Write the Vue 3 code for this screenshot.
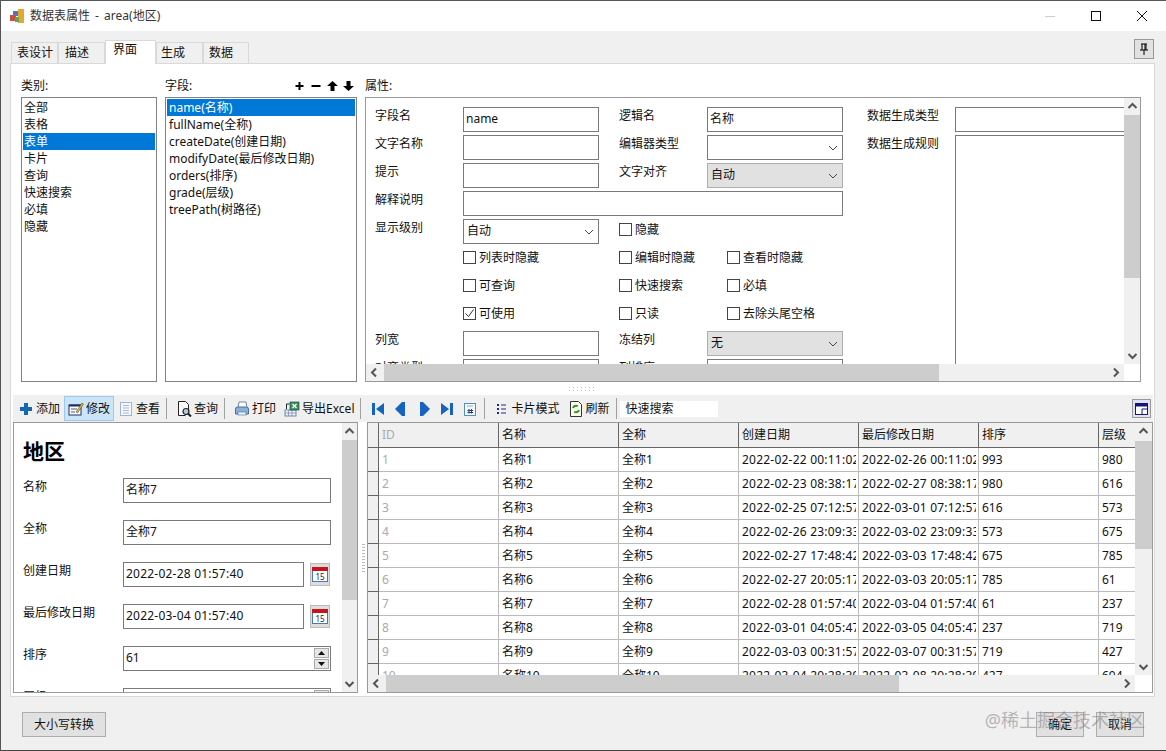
<script setup>
const categories = ['全部', '表格', '表单', '卡片', '查询', '快速搜索', '必填', '隐藏']
const fields = ['name(名称)', 'fullName(全称)', 'createDate(创建日期)', 'modifyDate(最后修改日期)', 'orders(排序)', 'grade(层级)', 'treePath(树路径)']
const columns = ['ID', '名称', '全称', '创建日期', '最后修改日期', '排序', '层级']
const rows = [
  ['1', '名称1', '全称1', '2022-02-22 00:11:02', '2022-02-26 00:11:02', '993', '980'],
  ['2', '名称2', '全称2', '2022-02-23 08:38:17', '2022-02-27 08:38:17', '980', '616'],
  ['3', '名称3', '全称3', '2022-02-25 07:12:57', '2022-03-01 07:12:57', '616', '573'],
  ['4', '名称4', '全称4', '2022-02-26 23:09:33', '2022-03-02 23:09:33', '573', '675'],
  ['5', '名称5', '全称5', '2022-02-27 17:48:42', '2022-03-03 17:48:42', '675', '785'],
  ['6', '名称6', '全称6', '2022-02-27 20:05:17', '2022-03-03 20:05:17', '785', '61'],
  ['7', '名称7', '全称7', '2022-02-28 01:57:40', '2022-03-04 01:57:40', '61', '237'],
  ['8', '名称8', '全称8', '2022-03-01 04:05:47', '2022-03-05 04:05:47', '237', '719'],
  ['9', '名称9', '全称9', '2022-03-03 00:31:57', '2022-03-07 00:31:57', '719', '427'],
  ['10', '名称10', '全称10', '2022-03-04 20:28:39', '2022-03-08 20:28:39', '427', '694']
]
</script>

<template>
  <div class="window">
    <div class="titlebar">
      <svg class="app-icon" width="16" height="16" viewBox="0 0 16 16">
        <rect x="9" y="1" width="6" height="14" fill="#e8a530" />
        <rect x="4" y="3" width="5" height="5" fill="#4a78c8" />
        <rect x="1" y="7" width="6" height="6" fill="#c8503c" />
        <rect x="6" y="9" width="4" height="5" fill="#58a858" />
      </svg>
      <span class="title">数据表属性 - area(地区)</span>
      <div class="win-btns">
        <svg width="46" height="12" viewBox="0 0 46 12"><path d="M18 6.5h10" stroke="#ccc" /></svg>
        <svg width="46" height="12" viewBox="0 0 46 12"><rect x="18.5" y="1.5" width="9" height="9" fill="none" stroke="#111" /></svg>
        <svg width="46" height="12" viewBox="0 0 46 12"><path d="M18 1l10 10M28 1L18 11" stroke="#111" fill="none" /></svg>
      </div>
    </div>

    <div class="tabstrip">
      <div class="tab">表设计</div>
      <div class="tab">描述</div>
      <div class="tab active">界面</div>
      <div class="tab">生成</div>
      <div class="tab">数据</div>
      <div class="pin">
        <svg width="10" height="13" viewBox="0 0 10 13"><path d="M2 1h6M3 1v6M7 1v6M1 7h8M5 7v5M6 1v6" stroke="#000" fill="none" /></svg>
      </div>
    </div>

    <div class="page">
      <div class="top">
        <div class="col col-cat">
          <div class="col-head">类别:</div>
          <ul class="list">
            <li v-for="c in categories" :key="c" :class="{ sel: c === '表单' }">{{ c }}</li>
          </ul>
        </div>
        <div class="col col-field">
          <div class="col-head">
            <span>字段:</span>
            <div class="field-tools">
              <svg width="16" height="10" viewBox="0 0 16 10"><path d="M4.500 1v8M.5 5h8" stroke="#000" stroke-width="2" fill="none" /></svg>
              <svg width="16" height="10" viewBox="0 0 16 10"><path d="M.5 5h9" stroke="#000" stroke-width="2" fill="none" /></svg>
              <svg width="16" height="10" viewBox="0 0 16 10"><path d="M5.500 0L11 5H7.500v5h-4V5H0z" fill="#000" /></svg>
              <svg width="11" height="10" viewBox="0 0 11 10"><path d="M5.500 10L0 5h3.500V0h4v5H11z" fill="#000" /></svg>
            </div>
          </div>
          <ul class="list">
            <li v-for="f in fields" :key="f" :class="{ sel: f === 'name(名称)' }">{{ f }}</li>
          </ul>
        </div>
        <div class="col col-props">
          <div class="col-head">属性:</div>
          <div class="scrollbox props">
            <div class="view">
              <div class="form">
                <div class="form-left">
                  <label>字段名</label><div class="ctl">name</div><i></i>
                  <label>逻辑名</label><div class="ctl">名称</div>

                  <label>文字名称</label><div class="ctl"></div><i></i>
                  <label>编辑器类型</label>
                  <div class="ctl sel-ctl"><svg class="chev" width="10" height="6" viewBox="0 0 10 6"><path d="M1 1l4 4 4-4" stroke="#444" fill="none" /></svg></div>

                  <label>提示</label><div class="ctl"></div><i></i>
                  <label>文字对齐</label>
                  <div class="ctl sel-ctl gray">自动<svg class="chev" width="10" height="6" viewBox="0 0 10 6"><path d="M1 1l4 4 4-4" stroke="#444" fill="none" /></svg></div>

                  <label>解释说明</label><div class="ctl wide"></div>

                  <label>显示级别</label>
                  <div class="ctl sel-ctl">自动<svg class="chev" width="10" height="6" viewBox="0 0 10 6"><path d="M1 1l4 4 4-4" stroke="#444" fill="none" /></svg></div><i></i>
                  <div class="check solo"><span class="box"></span>隐藏</div>

                  <i></i>
                  <div class="checks">
                    <div class="check"><span class="box"></span>列表时隐藏</div>
                    <div class="check"><span class="box"></span>编辑时隐藏</div>
                    <div class="check"><span class="box"></span>查看时隐藏</div>
                  </div>

                  <i></i>
                  <div class="checks">
                    <div class="check"><span class="box"></span>可查询</div>
                    <div class="check"><span class="box"></span>快速搜索</div>
                    <div class="check"><span class="box"></span>必填</div>
                  </div>

                  <i></i>
                  <div class="checks">
                    <div class="check">
                      <span class="box"><svg width="11" height="11" viewBox="0 0 11 11"><path d="M1.5 5.500l3 3 5-7" stroke="#333" fill="none" /></svg></span>可使用
                    </div>
                    <div class="check"><span class="box"></span>只读</div>
                    <div class="check"><span class="box"></span>去除头尾空格</div>
                  </div>

                  <label>列宽</label><div class="ctl"></div><i></i>
                  <label>冻结列</label>
                  <div class="ctl sel-ctl gray">无<svg class="chev" width="10" height="6" viewBox="0 0 10 6"><path d="M1 1l4 4 4-4" stroke="#444" fill="none" /></svg></div>

                  <label>对齐类型</label><div class="ctl"></div><i></i>
                  <label>列排序</label><div class="ctl"></div>
                </div>
                <div class="form-right">
                  <label>数据生成类型</label><div class="ctl"></div>
                  <label>数据生成规则</label><div class="ctl rule"></div>
                </div>
              </div>
            </div>
            <div class="sb-v">
              <svg class="arrow" width="17" height="17" viewBox="0 0 17 17"><path d="M4.500 10l4-4 4 4" stroke="#555" stroke-width="2" fill="none" /></svg>
              <div class="track"><div class="thumb"></div></div>
              <svg class="arrow" width="17" height="17" viewBox="0 0 17 17"><path d="M4.500 7l4 4 4-4" stroke="#555" stroke-width="2" fill="none" /></svg>
            </div>
            <div class="sb-h">
              <svg class="arrow" width="17" height="17" viewBox="0 0 17 17"><path d="M10 4.500l-4 4 4 4" stroke="#555" stroke-width="2" fill="none" /></svg>
              <div class="track"><div class="thumb"></div></div>
              <svg class="arrow" width="17" height="17" viewBox="0 0 17 17"><path d="M7 4.500l4 4-4 4" stroke="#555" stroke-width="2" fill="none" /></svg>
            </div>
          </div>
        </div>
      </div>

      <div class="grip-h"></div>

      <div class="toolbar">
        <div class="tool first">
          <svg width="16" height="16" viewBox="0 0 16 16"><path d="M6 2h4v4h4v4h-4v4H6v-4H2V6h4z" fill="#1469b4" /></svg>添加
        </div>
        <div class="tool on">
          <svg width="16" height="16" viewBox="0 0 16 16"><rect x="1" y="4" width="12" height="10" fill="#fff" stroke="#1c2c6c" /><path d="M1 4.500h12" stroke="#1c2c6c" stroke-width="2" /><path d="M3 8h6M3 11h4" stroke="#556" /><path d="M8 11l6-9 1.500 1-6 9z" fill="#e8c020" stroke="#333" stroke-width=".5" /></svg>修改
        </div>
        <div class="tool">
          <svg width="16" height="16" viewBox="0 0 16 16"><rect x="2.500" y="1.500" width="11" height="13" fill="#f4f8fc" stroke="#9ab8d4" /><path d="M5 4.500h6M5 7h6M5 9.500h6M5 12h6" stroke="#a8bccc" /></svg>查看
        </div>
        <div class="sep"></div>
        <div class="tool">
          <svg width="16" height="16" viewBox="0 0 16 16"><path d="M2.500.500h7l3 3v7M2.500.500v14h7" fill="#fff" stroke="#222" /><circle cx="10" cy="10.500" r="3" fill="#a8cce0" stroke="#222" stroke-width="1.200" /><path d="M12 12.500l3 3" stroke="#222" stroke-width="2" /></svg>查询
        </div>
        <div class="sep"></div>
        <div class="tool">
          <svg width="16" height="16" viewBox="0 0 16 16"><path d="M5 1h7l1 6H4z" fill="#fff" stroke="#7088a8" /><path d="M1.500 8q0-2 2-2h9q2 0 2 2v5h-13z" fill="#8cb0d8" stroke="#4c6c98" /><rect x="4" y="11" width="8" height="3" fill="#eef" stroke="#4c6c98" stroke-width=".6" /></svg>打印
        </div>
        <div class="tool">
          <svg width="16" height="16" viewBox="0 0 16 16"><rect x="1" y="9" width="11" height="6" fill="#eef2f8" stroke="#7088a8" /><path d="M4.500 9v6M8 9v6M1 12h11" stroke="#7088a8" stroke-width=".7" /><rect x="6" y="1" width="9" height="8" fill="#3a9a50" stroke="#226" stroke-width=".6" /><path d="M8.500 3l4 4M12.500 3l-4 4" stroke="#fff" stroke-width="1.200" /><path d="M2.500 8V3h3" stroke="#222" fill="none" /></svg>导出Excel
        </div>
        <div class="sep"></div>
        <div class="nav">
          <svg width="12" height="12" viewBox="0 0 12 12"><path d="M0 0h3v12H0zM12 0v12L4 6z" fill="#1464c0" /></svg>
        </div>
        <div class="nav">
          <svg width="12" height="14" viewBox="0 0 12 14"><path d="M7 0h3v14H7L0 7z" fill="#1464c0" /></svg>
        </div>
        <div class="nav">
          <svg width="12" height="14" viewBox="0 0 12 14"><path d="M5 0H2v14h3l7-7z" fill="#1464c0" /></svg>
        </div>
        <div class="nav">
          <svg width="12" height="12" viewBox="0 0 12 12"><path d="M12 0H9v12h3zM0 0v12l8-6z" fill="#1464c0" /></svg>
        </div>
        <div class="nav">
          <svg width="12" height="13" viewBox="0 0 12 13"><rect x=".5" y=".5" width="11" height="12" fill="#f4f8fc" stroke="#5a8cc0" /><path d="M3 3h6" stroke="#9ab" /><path d="M5 6v4.500M7.500 6v4.500M3.500 7.500h5.500M3.500 9.500h5.500" stroke="#1c3c8c" /></svg>
        </div>
        <div class="sep nav-sep"></div>
        <div class="tool">
          <svg width="16" height="16" viewBox="0 0 16 16"><path d="M4 3h2v2H4zM4 7h2v2H4zM4 11h2v2H4z" fill="#1c2c8c" /><path d="M8 4h5M8 8h5M8 12h5" stroke="#1c2c8c" /></svg>卡片模式
        </div>
        <div class="tool">
          <svg width="16" height="16" viewBox="0 0 16 16"><path d="M2.500.500h8l3 3v12h-11z" fill="#fffde8" stroke="#333" /><path d="M5 7q1-3 5-2M11 9q-1 3-5 2" stroke="#1c9c2c" stroke-width="1.800" fill="none" /></svg>刷新
        </div>
        <div class="sep"></div>
        <div class="search">快速搜索</div>
        <div class="layout-btn">
          <svg width="13" height="12" viewBox="0 0 13 12"><rect x=".5" y=".5" width="12" height="11" fill="#fff" stroke="#14147c" /><path d="M0 2h13" stroke="#14147c" stroke-width="3" /><path d="M7 6h6M7 6v5" stroke="#14147c" /></svg>
        </div>
      </div>

      <div class="bottom">
        <div class="scrollbox edit">
          <div class="view">
            <h2 class="heading">地区</h2>
            <div class="edit-row"><label>名称</label><div class="ctl">名称7</div></div>
            <div class="edit-row"><label>全称</label><div class="ctl">全称7</div></div>
            <div class="edit-row">
              <label>创建日期</label>
              <div class="ctl date stamp">2022-02-28 01:57:40</div>
              <div class="cal"><svg width="16" height="15" viewBox="0 0 16 15"><rect x=".5" y=".5" width="15" height="14" fill="#fff" stroke="#4a78b0" /><rect width="16" height="4" fill="#c8141c" /><text x="8" y="12.500" text-anchor="middle" class="cal-num">15</text></svg></div>
            </div>
            <div class="edit-row">
              <label>最后修改日期</label>
              <div class="ctl date stamp">2022-03-04 01:57:40</div>
              <div class="cal"><svg width="16" height="15" viewBox="0 0 16 15"><rect x=".5" y=".5" width="15" height="14" fill="#fff" stroke="#4a78b0" /><rect width="16" height="4" fill="#c8141c" /><text x="8" y="12.500" text-anchor="middle" class="cal-num">15</text></svg></div>
            </div>
            <div class="edit-row">
              <label>排序</label>
              <div class="ctl spin">61
                <div class="spin-btns">
                  <span><svg width="7" height="4" viewBox="0 0 7 4"><path d="M3.500 0L7 4H0z" fill="#111" /></svg></span>
                  <span><svg width="7" height="4" viewBox="0 0 7 4"><path d="M3.500 4L7 0H0z" fill="#111" /></svg></span>
                </div>
              </div>
            </div>
            <div class="edit-row">
              <label>层级</label>
              <div class="ctl spin">237
                <div class="spin-btns"><span></span><span></span></div>
              </div>
            </div>
          </div>
          <div class="sb-v">
            <svg class="arrow" width="15" height="17" viewBox="0 0 15 17"><path d="M3.500 10l4-4 4 4" stroke="#555" stroke-width="2" fill="none" /></svg>
            <div class="track"><div class="thumb"></div></div>
            <svg class="arrow" width="15" height="17" viewBox="0 0 15 17"><path d="M3.500 7l4 4 4-4" stroke="#555" stroke-width="2" fill="none" /></svg>
          </div>
        </div>

        <div class="grip-v"></div>

        <div class="scrollbox grid-box">
          <div class="view">
            <div class="g-row g-head">
              <div class="g-ind"></div>
              <div v-for="c in columns" :key="c" class="g-cell" :class="{ muted: c === 'ID' }">{{ c }}</div>
            </div>
            <div v-for="r in rows" :key="r[0]" class="g-row">
              <div class="g-ind"></div>
              <div v-for="(v, i) in r" :key="i" class="g-cell" :class="{ muted: i === 0, stamp: i === 3 || i === 4 }">
                <span class="g-text">{{ v }}</span>
              </div>
            </div>
          </div>
          <div class="sb-v">
            <svg class="arrow" width="17" height="17" viewBox="0 0 17 17"><path d="M4.500 10l4-4 4 4" stroke="#555" stroke-width="2" fill="none" /></svg>
            <div class="track"><div class="thumb"></div></div>
            <svg class="arrow" width="17" height="17" viewBox="0 0 17 17"><path d="M4.500 7l4 4 4-4" stroke="#555" stroke-width="2" fill="none" /></svg>
          </div>
          <div class="sb-h">
            <svg class="arrow" width="17" height="17" viewBox="0 0 17 17"><path d="M10 4.500l-4 4 4 4" stroke="#555" stroke-width="2" fill="none" /></svg>
            <div class="track"><div class="thumb"></div></div>
            <svg class="arrow" width="17" height="17" viewBox="0 0 17 17"><path d="M7 4.500l4 4-4 4" stroke="#555" stroke-width="2" fill="none" /></svg>
          </div>
        </div>
      </div>
    </div>

    <div class="footer">
      <button class="btn case">大小写转换</button>
      <div class="spacer"></div>
      <button class="btn">确定</button>
      <button class="btn">取消</button>
      <div class="watermark">@稀土掘金技术社区</div>
    </div>
  </div>
</template>

<style scoped>
.window {
  width: 1166px;
  height: 751px;
  box-sizing: border-box;
  display: flex;
  flex-direction: column;
  position: relative;
  overflow: hidden;
  background: #f0f0f0;
  border-top: 1px solid #555;
  border-left: 1px solid #555;
  border-bottom: 1px solid #444;
  font: 12px/18px "Noto Sans", "Noto Sans CJK SC", sans-serif;
  color: #111;
}
.titlebar {
  height: 30px;
  flex: none;
  background: #fff;
  display: flex;
  align-items: center;
  padding-left: 8px;
}
.title {
  margin-left: 5px;
  color: #333;
  word-spacing: 2px;
}
.win-btns {
  margin-left: auto;
  display: flex;
  margin-right: 1px;
}

.tabstrip {
  height: 32px;
  flex: none;
  display: flex;
  align-items: flex-end;
  padding-left: 10px;
  position: relative;
}
.tab {
  height: 21px;
  width: 47px;
  padding-left: 5px;
  line-height: 20px;
  box-sizing: border-box;
  background: #f0f0f0;
  border: 1px solid #d9d9d9;
  border-bottom: none;
}
.tab:nth-child(2) { padding-left: 6px; }
.tab:nth-child(4) { padding-left: 4px; }
.tab:nth-child(5) { padding-left: 5px; width: 46px; }
.tab.active {
  width: 51px;
  height: 24px;
  padding-left: 7px;
  margin-bottom: -1px;
  background: #fff;
  line-height: 18px;
  position: relative;
  z-index: 1;
}
.pin {
  margin-left: auto;
  margin-right: 12px;
  margin-bottom: 4px;
  width: 20px;
  height: 20px;
  box-sizing: border-box;
  background: #e1e1e1;
  border: 1px solid #999;
  display: flex;
  align-items: center;
  justify-content: center;
}

.page {
  height: 634px;
  flex: none;
  box-sizing: border-box;
  margin: 0 11px 0 9px;
  background: #fff;
  border: 1px solid #d9d9d9;
  display: flex;
  flex-direction: column;
}
.top {
  display: flex;
  gap: 8px;
  padding: 13px 0 0 10px;
}
.col-cat { width: 136px; }
.col-field { width: 192px; }
.col-props { width: 776px; }
.col-head {
  height: 20px;
  box-sizing: border-box;
  padding-bottom: 2px;
  display: flex;
  justify-content: space-between;
  align-items: center;
}
.field-tools {
  display: flex;
  align-items: center;
  margin-right: 3px;
}
.list {
  height: 285px;
  box-sizing: border-box;
  margin: 0;
  padding: 1px;
  list-style: none;
  border: 1px solid #828282;
}
.list li {
  height: 17px;
  line-height: 17px;
  padding-left: 1px;
  white-space: nowrap;
}
.col-field .list li { padding-left: 2px; }
.list li.sel {
  background: #0078d7;
  color: #fff;
}

.scrollbox {
  display: grid;
  box-sizing: border-box;
  border: 1px solid #999;
  overflow: hidden;
  background: #fff;
}
.props {
  height: 285px;
  grid-template-columns: 758px 17px;
  grid-template-rows: 266px 17px;
}
.view {
  overflow: hidden;
  grid-column: 1;
  grid-row: 1;
}
.sb-v, .sb-h {
  background: #f0f0f0;
  display: flex;
  flex-direction: column;
}
.sb-v {
  grid-column: 2;
  grid-row: 1;
}
.sb-h {
  flex-direction: row;
  grid-column: 1;
  grid-row: 2;
}
.arrow { flex: none; display: block; }
.track { flex: 1; min-width: 0; min-height: 0; }
.thumb { background: #cdcdcd; }
.sb-v .thumb { width: 100%; }
.sb-h .thumb { height: 100%; }
.props .sb-v .thumb { height: 163px; }
.props .sb-h .thumb { width: 555px; margin-left: 1px; }

.form {
  display: flex;
  gap: 24px;
  padding: 9px 0 0 9px;
  width: 900px;
}
.form-left, .form-right {
  display: grid;
  grid-auto-rows: 25px;
  row-gap: 3px;
  flex: none;
}
.form-left { grid-template-columns: 88px 136px 20px 88px 136px; }
.form-right { grid-template-columns: 88px 200px; }
.form i { display: block; }
.form label { white-space: nowrap; }
.ctl {
  box-sizing: border-box;
  border: 1px solid #7a7a7a;
  background: #fff;
  padding-left: 2px;
  line-height: 22px;
  white-space: nowrap;
  position: relative;
}
.stamp { letter-spacing: 0.22px; }
.wide { grid-column: span 4; }
.rule { grid-row: span 9; }
.sel-ctl { padding-left: 3px; }
.gray { background: #e1e1e1; border-color: #adadad; }
.chev { position: absolute; right: 4px; top: 9px; }
.solo { grid-column: span 2; }
.checks {
  grid-column: span 4;
  display: grid;
  grid-template-columns: 156px 108px 1fr;
}
.check {
  box-sizing: border-box;
  padding-bottom: 4px;
  display: flex;
  align-items: center;
  gap: 3px;
  white-space: nowrap;
}
.box {
  width: 13px;
  height: 13px;
  flex: none;
  box-sizing: border-box;
  border: 1px solid #444;
  background: #fff;
  display: flex;
}

.grip-h {
  height: 13px;
  flex: none;
  position: relative;
}
.grip-h::after {
  content: "";
  position: absolute;
  left: 558px;
  top: 5px;
  width: 28px;
  height: 5px;
  background: repeating-linear-gradient(90deg, #bbb 0 1px, transparent 1px 4px);
  -webkit-mask: repeating-linear-gradient(180deg, #000 0 1px, transparent 1px 3px);
}

.toolbar {
  height: 27px;
  flex: none;
  margin: 0 1px 0 2px;
  padding-left: 1px;
  display: flex;
  align-items: center;
  background: #f0f0f0;
  white-space: nowrap;
}
.tool {
  height: 25px;
  box-sizing: border-box;
  padding: 1px 4px 0;
  display: flex;
  align-items: center;
  gap: 2px;
}
.tool.on {
  background: #cce4f7;
  border: 1px solid #99c9ef;
  padding: 0 3px;
}
.sep {
  width: 1px;
  height: 21px;
  margin: 0 5px 0 2px;
  background: #a0a0a0;
  flex: none;
}
.nav {
  width: 23px;
  display: flex;
  justify-content: center;
  margin-top: 1px;
}
.nav-sep { margin: 0 4px 0 3px; }
.search {
  width: 98px;
  height: 16px;
  box-sizing: border-box;
  padding-left: 6px;
  line-height: 16px;
  margin: 1px 0 0 -2px;
  background: #fff;
}
.layout-btn {
  margin-left: auto;
  margin-right: 2px;
  width: 19px;
  height: 19px;
  box-sizing: border-box;
  border: 1px solid #999;
  background: #dfe3f0;
  display: flex;
  align-items: center;
  justify-content: center;
}

.bottom {
  flex: 1;
  min-height: 0;
  display: flex;
  margin: 0 1px 3px 2px;
}
.edit {
  width: 345px;
  grid-template-columns: 328px 15px;
  grid-template-rows: minmax(0, 1fr);
}
.edit .sb-v .thumb { height: 160px; }
.heading {
  margin: 0;
  height: 55px;
  padding-left: 9px;
  font-size: 21px;
  line-height: 56px;
  font-weight: 700;
  color: #000;
}
.edit-row {
  display: flex;
  height: 25px;
  margin-bottom: 17px;
  padding-left: 9px;
}
.edit-row label {
  width: 100px;
  flex: none;
  white-space: nowrap;
}
.edit-row .ctl { width: 208px; flex: none; }
.edit-row .date { width: 181px; }
.cal {
  width: 20px;
  height: 23px;
  margin: 1px 0 0 6px;
  box-sizing: border-box;
  background: #ddd;
  border: 1px solid #bbb;
  display: flex;
  align-items: center;
  justify-content: center;
}
.cal-num {
  font-size: 8px;
  fill: #223;
}
.spin-btns {
  position: absolute;
  right: 1px;
  top: 1px;
  display: flex;
  flex-direction: column;
  gap: 1px;
}
.spin-btns span {
  width: 15px;
  height: 10px;
  background: #e6e6e6;
  border: 1px solid #aaa;
  box-sizing: border-box;
  display: flex;
  align-items: center;
  justify-content: center;
}

.grip-v {
  width: 9px;
  flex: none;
  position: relative;
}
.grip-v::after {
  content: "";
  position: absolute;
  left: 4px;
  top: 122px;
  width: 3px;
  height: 28px;
  background: repeating-linear-gradient(180deg, #bbb 0 1px, transparent 1px 3px);
}

.grid-box {
  width: 786px;
  grid-template-columns: 767px 17px;
  grid-template-rows: minmax(0, 1fr) 17px;
}
.grid-box .sb-v .thumb { height: 108px; margin-top: 1px; }
.grid-box .sb-h .thumb { width: 513px; margin-left: 1px; }
.g-row {
  display: grid;
  grid-template-columns: 11px 120px 120px 120px 120px 120px 120px 36px;
  height: 24px;
  box-sizing: border-box;
  line-height: 23px;
}
.g-head { height: 25px; line-height: 24px; }
.g-ind {
  background: #f0f0f0;
  border-right: 1px solid #666;
  border-bottom: 1px solid #666;
}
.g-cell {
  padding-left: 3px;
  overflow: hidden;
  white-space: nowrap;
  border-right: 1px solid #bbb;
  border-bottom: 1px solid #bbb;
}
.g-text {
  display: block;
  overflow: hidden;
  margin-right: 2px;
}
.g-cell:last-child { border-right: none; }
.muted { color: #aaa; }
.g-head .g-cell {
  background: #f0f0f0;
  border-right-color: #666;
  border-bottom-color: #666;
}
.g-head .g-cell:last-child { border-right: none; }

.footer {
  flex: 1;
  display: flex;
  align-items: flex-start;
  gap: 12px;
  padding: 15px 22px 0 21px;
  position: relative;
}
.spacer { flex: 1; }
.btn {
  width: 48px;
  height: 25px;
  padding: 0;
  box-sizing: border-box;
  background: #e1e1e1;
  border: 1px solid #adadad;
  font: inherit;
  color: #111;
}
.case { width: 84px; }
.watermark {
  position: absolute;
  right: 21px;
  top: 11px;
  font-size: 18px;
  line-height: 24px;
  color: rgba(120, 120, 120, 0.5);
  white-space: nowrap;
}
</style>

<style>
html, body {
  margin: 0;
  overflow: hidden;
}
</style>
